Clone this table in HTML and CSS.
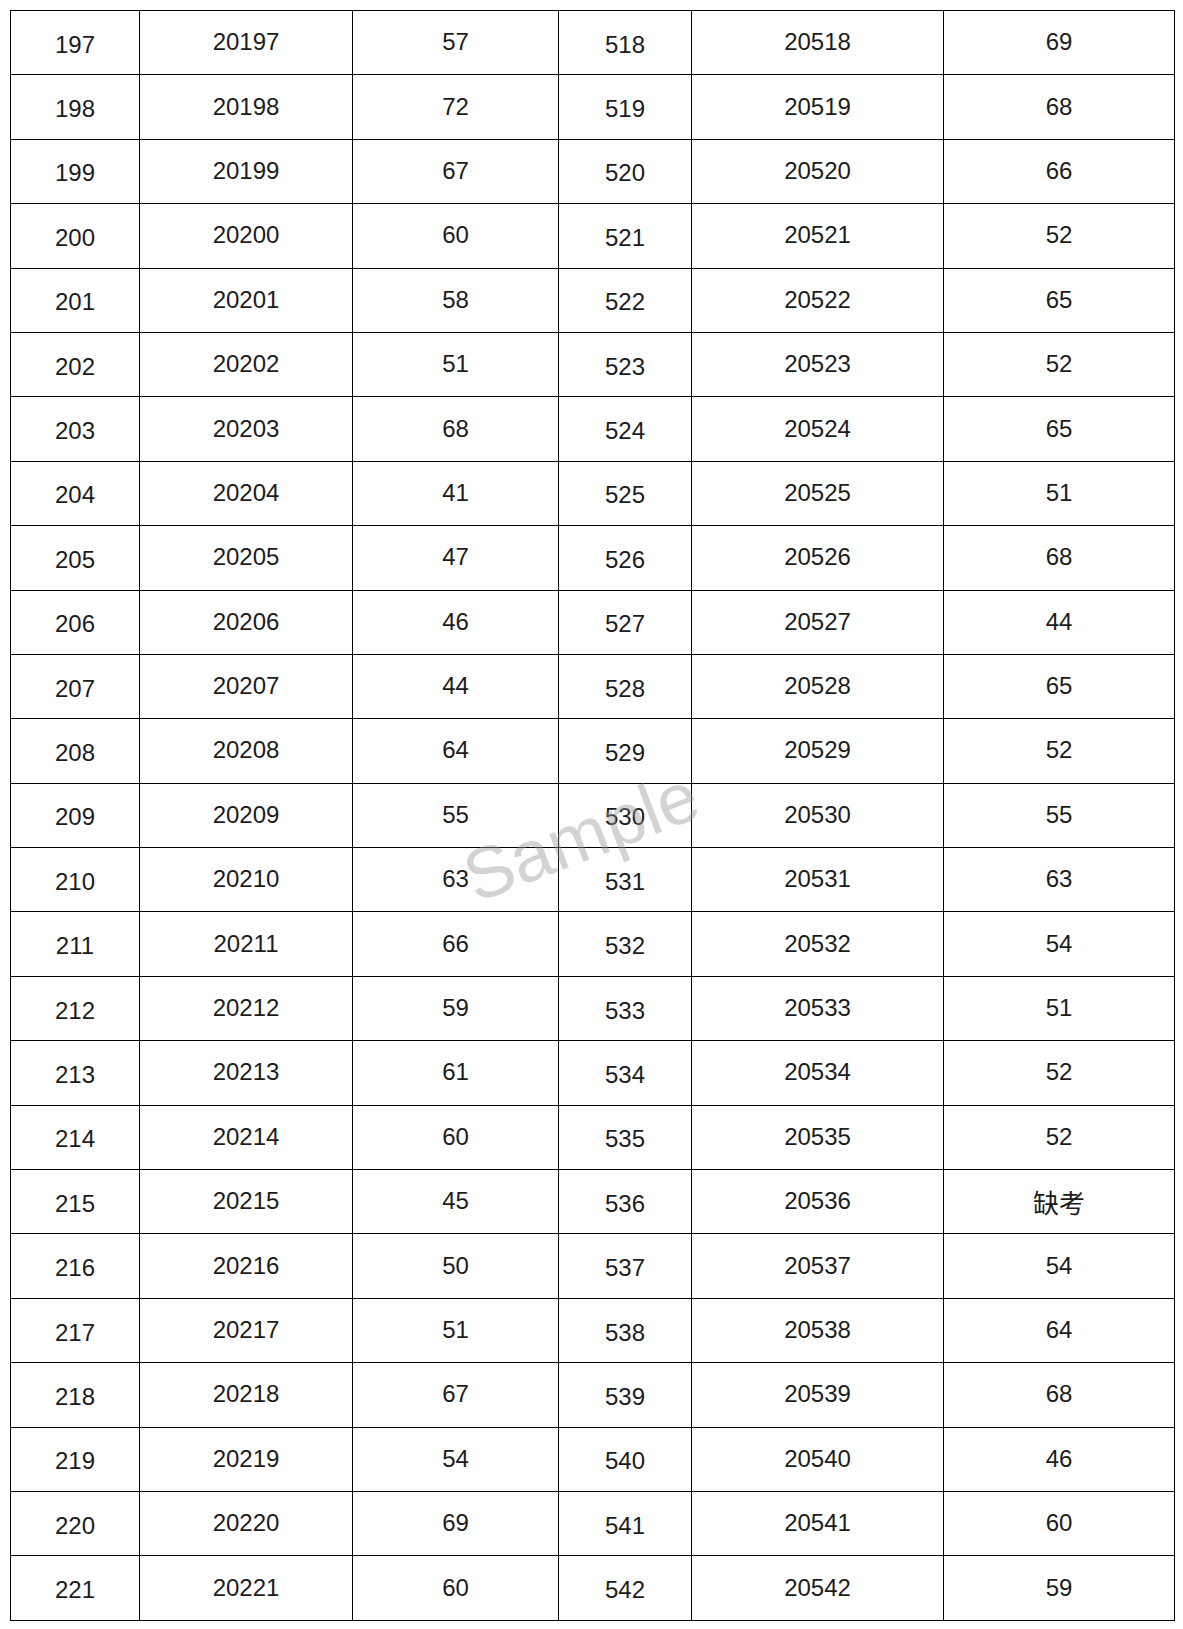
FILE: index.html
```html
<!DOCTYPE html>
<html lang="zh">
<head>
<meta charset="utf-8">
<title>成绩表</title>
<link rel="stylesheet" href="styles.css">
</head>
<body>
<div class="sheet">
<table class="scores">
<colgroup>
<col class="c1"><col class="c2"><col class="c3"><col class="c4"><col class="c5"><col class="c6">
</colgroup>
<tbody>
<tr><td class="lo">197</td><td>20197</td><td>57</td><td class="lo">518</td><td>20518</td><td>69</td></tr>
<tr><td class="lo">198</td><td>20198</td><td>72</td><td class="lo">519</td><td>20519</td><td>68</td></tr>
<tr><td class="lo">199</td><td>20199</td><td>67</td><td class="lo">520</td><td>20520</td><td>66</td></tr>
<tr><td class="lo">200</td><td>20200</td><td>60</td><td class="lo">521</td><td>20521</td><td>52</td></tr>
<tr><td class="lo">201</td><td>20201</td><td>58</td><td class="lo">522</td><td>20522</td><td>65</td></tr>
<tr><td class="lo">202</td><td>20202</td><td>51</td><td class="lo">523</td><td>20523</td><td>52</td></tr>
<tr><td class="lo">203</td><td>20203</td><td>68</td><td class="lo">524</td><td>20524</td><td>65</td></tr>
<tr><td class="lo">204</td><td>20204</td><td>41</td><td class="lo">525</td><td>20525</td><td>51</td></tr>
<tr><td class="lo">205</td><td>20205</td><td>47</td><td class="lo">526</td><td>20526</td><td>68</td></tr>
<tr><td class="lo">206</td><td>20206</td><td>46</td><td class="lo">527</td><td>20527</td><td>44</td></tr>
<tr><td class="lo">207</td><td>20207</td><td>44</td><td class="lo">528</td><td>20528</td><td>65</td></tr>
<tr><td class="lo">208</td><td>20208</td><td>64</td><td class="lo">529</td><td>20529</td><td>52</td></tr>
<tr><td class="lo">209</td><td>20209</td><td>55</td><td class="lo">530</td><td>20530</td><td>55</td></tr>
<tr><td class="lo">210</td><td>20210</td><td>63</td><td class="lo">531</td><td>20531</td><td>63</td></tr>
<tr><td class="lo">211</td><td>20211</td><td>66</td><td class="lo">532</td><td>20532</td><td>54</td></tr>
<tr><td class="lo">212</td><td>20212</td><td>59</td><td class="lo">533</td><td>20533</td><td>51</td></tr>
<tr><td class="lo">213</td><td>20213</td><td>61</td><td class="lo">534</td><td>20534</td><td>52</td></tr>
<tr><td class="lo">214</td><td>20214</td><td>60</td><td class="lo">535</td><td>20535</td><td>52</td></tr>
<tr><td class="lo">215</td><td>20215</td><td>45</td><td class="lo">536</td><td>20536</td><td class="cjk">缺考</td></tr>
<tr><td class="lo">216</td><td>20216</td><td>50</td><td class="lo">537</td><td>20537</td><td>54</td></tr>
<tr><td class="lo">217</td><td>20217</td><td>51</td><td class="lo">538</td><td>20538</td><td>64</td></tr>
<tr><td class="lo">218</td><td>20218</td><td>67</td><td class="lo">539</td><td>20539</td><td>68</td></tr>
<tr><td class="lo">219</td><td>20219</td><td>54</td><td class="lo">540</td><td>20540</td><td>46</td></tr>
<tr><td class="lo">220</td><td>20220</td><td>69</td><td class="lo">541</td><td>20541</td><td>60</td></tr>
<tr><td class="lo">221</td><td>20221</td><td>60</td><td class="lo">542</td><td>20542</td><td>59</td></tr>
</tbody>
</table>
<div class="watermark">Sample</div>
</div>
</body>
</html>
```

FILE: styles.css
```css
html, body {
  margin: 0;
  padding: 0;
  background: #ffffff;
}

.sheet {
  position: relative;
  padding: 10px 0 0 10px;
  width: 1183px;
  box-sizing: border-box;
}

.scores {
  border-collapse: collapse;
  table-layout: fixed;
  width: 1164px;
  height: 1611px;
  font-family: "Liberation Sans", "Noto Sans CJK KR", Arial, sans-serif;
  font-size: 24px;
  color: #1c1c1c;
}

.c1 { width: 129px; }
.c2 { width: 213px; }
.c3 { width: 206px; }
.c4 { width: 133px; }
.c5 { width: 252px; }
.c6 { width: 231px; }

.scores td {
  border: 1px solid #000;
  text-align: center;
  vertical-align: middle;
  padding: 0 0 1px 0;
  line-height: 28px;
}

.scores td.lo {
  padding: 4px 0 0 0;
}

.scores td.cjk {
  font-family: "Noto Sans CJK SC", "Noto Sans CJK KR", sans-serif;
  font-size: 26px;
  padding-bottom: 0;
}

.watermark {
  position: absolute;
  left: 581px;
  top: 836px;
  transform: translate(-50%, -50%) rotate(-21deg);
  font-family: "Liberation Sans", Arial, sans-serif;
  font-size: 72px;
  color: rgba(150, 150, 150, 0.42);
  white-space: nowrap;
  pointer-events: none;
}
```
